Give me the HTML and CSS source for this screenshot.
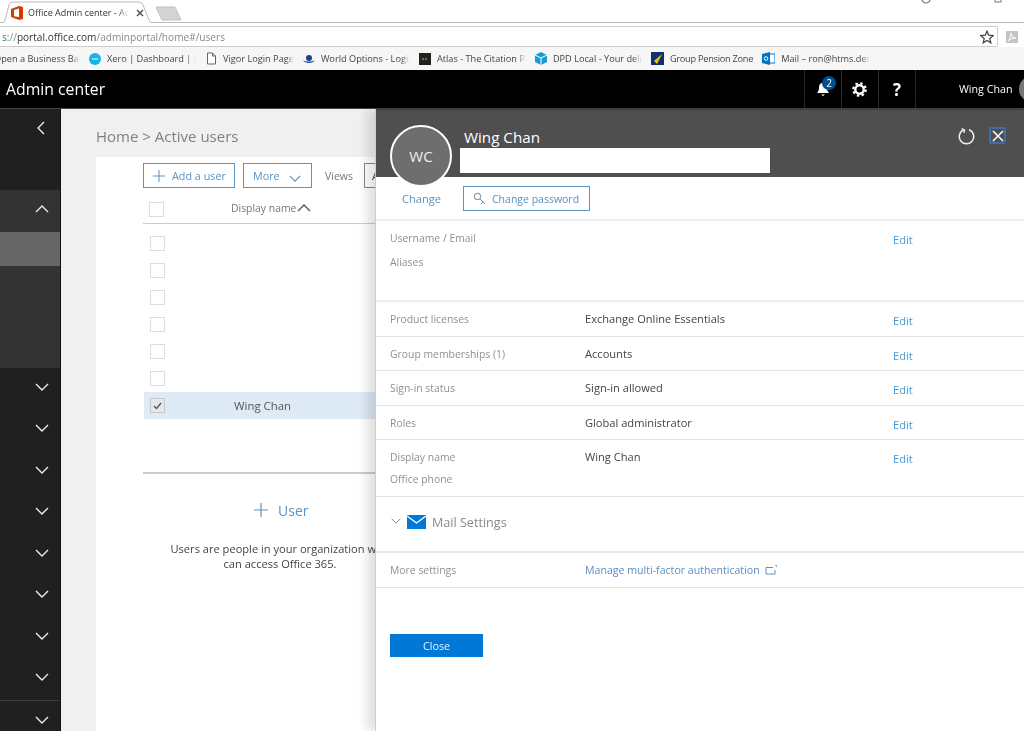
FILE: index.html
```html
<!doctype html>
<html>
<head>
	<meta charset="utf-8" />
	<title>Office Admin center - Active users</title>
	<link rel="stylesheet" href="styles.css">
</head>
<body>

<svg class="defs" width="0" height="0">
	<symbol id="down" viewBox="0 0 14 8"><path d="M1 1l6 6 6-6" fill="none" stroke="currentColor" stroke-width="1.4"/></symbol>
	<symbol id="plus" viewBox="0 0 14 14"><path d="M7 0v14M0 7h14" fill="none" stroke="currentColor" stroke-width="1.2"/></symbol>
</svg>

<div class="chrome">
	<div class="tabstrip">
		<div class="tab">
			<svg class="tabshape" width="158" height="23"><path d="M0 23h2q2 0 3-3L9 5q1-3 4-3h126q3 0 4 3l6 15q1 3 4 3h5" fill="#fff" stroke="#bbb"/></svg>
			<svg class="favicon" width="12" height="14" viewBox="0 0 12 14"><path d="M0 3L8 0l4 1v12l-4 1-8-3z" fill="#d83b01"/><path d="M3 4l5-1.500v8.500l-5-.8z" fill="#fff"/></svg>
			<span class="tabtitle">Office Admin center - Active users</span>
			<svg class="tabclose" width="8" height="8"><path d="M1 1l6 6M7 1L1 7" stroke="#555" stroke-width="1.5"/></svg>
		</div>
		<svg class="newtab" width="28" height="15"><path d="M1 1h19l6 13H7z" fill="#d4d4d4" stroke="#c0c0c0"/></svg>
		<div class="winbtns">
			<svg width="10" height="4"><circle cx="5" cy="-1" r="4" fill="none" stroke="#777" stroke-width="1.200"/></svg>
			<svg width="8" height="3"><rect x="1" y="-4" width="6" height="6" fill="none" stroke="#777"/></svg>
		</div>
	</div>
	<div class="toolbar">
		<div class="omnibox">
			<span class="url"><span class="scheme">s:</span><span class="soft">//</span><span class="host">portal.office.com</span><span class="soft">/adminportal/home#/users</span></span>
			<svg width="14" height="14" viewBox="0 0 24 24"><path d="M12 2l3 7 7.500.7-5.700 5 1.700 7.300L12 18l-6.500 4 1.700-7.300-5.700-5L9 9z" fill="none" stroke="#444" stroke-width="2.200"/></svg>
		</div>
		<div class="pdficon"><svg width="10" height="10" viewBox="0 0 10 10"><path d="M1 9c2-2 3-5 3-8 0 3 2 5 5 5-3 0-6 1-8 3z" fill="none" stroke="#fff"/></svg></div>
	</div>
	<div class="bookmarks">
		<div class="bm first"><span>Open a Business Bank Account</span></div>
		<div class="bm">
			<svg width="12" height="12"><circle cx="6" cy="6" r="6" fill="#13b5ea"/><path d="M3 6h6" stroke="#fff"/></svg>
			<span>Xero | Dashboard | Sparkle Ltd</span>
		</div>
		<div class="bm">
			<svg width="12" height="13"><path d="M2.500 1h5l3 3v8h-8z" fill="#fff" stroke="#666"/><path d="M7.500 1v3h3" fill="none" stroke="#666"/></svg>
			<span>Vigor Login Page</span>
		</div>
		<div class="bm">
			<svg width="12" height="12"><circle cx="6" cy="5" r="3" fill="#1d3f8f"/><path d="M0 7c2 4 10 4 12 0-3 2-9 2-12 0z" fill="#1d3f8f"/></svg>
			<span>World Options - Login Page</span>
		</div>
		<div class="bm">
			<svg width="12" height="12"><rect width="12" height="12" fill="#222"/><path d="M3 6h6" stroke="#e0b040" stroke-dasharray="2 1"/></svg>
			<span>Atlas - The Citation Portal</span>
		</div>
		<div class="bm">
			<svg width="12" height="13"><path d="M6 0l6 3v7l-6 3-6-3V3z" fill="#1a9ad6"/><path d="M0 3l6 3 6-3M6 6v7" fill="none" stroke="#fff"/></svg>
			<span>DPD Local - Your delivery</span>
		</div>
		<div class="bm short">
			<svg width="13" height="13"><rect width="13" height="13" fill="#12306e"/><path d="M11 2L3 9l3 3z" fill="#f4c20d"/></svg>
			<span>Group Pension Zone</span>
		</div>
		<div class="bm">
			<svg width="13" height="13"><rect x="5" y="2" width="8" height="9" fill="#fff" stroke="#0072c6"/><path d="M0 2l8-2v13l-8-2z" fill="#0072c6"/><circle cx="4" cy="6.500" r="1.800" fill="none" stroke="#fff"/></svg>
			<span>Mail – ron@htms.demon.co.uk</span>
		</div>
	</div>
</div>

<header class="topbar">
	<div class="brand">Admin center</div>
	<div class="topicon bell">
		<svg width="16" height="16" viewBox="0 0 16 16"><path d="M8 2c3 0 4 2 4 5 0 2 1 4 2 5H2c1-1 2-3 2-5 0-3 1-5 4-5z M6 13.500h4L8 15z" fill="#fff"/></svg>
		<span class="badge">2</span>
	</div>
	<div class="topicon gear">
		<svg width="15" height="15" viewBox="0 0 16 16"><circle cx="8" cy="8" r="4.500" fill="none" stroke="#fff" stroke-width="2.600"/><circle cx="8" cy="8" r="6.600" fill="none" stroke="#fff" stroke-width="2.400" stroke-dasharray="2.600 2.580"/></svg>
	</div>
	<div class="topicon help">?</div>
	<div class="me">Wing Chan<span class="meavatar"></span></div>
</header>

<div class="shell">
	<nav class="sidebar">
		<div class="navtop">
			<svg width="8" height="14" viewBox="0 0 8 14"><path d="M7 1L1 7l6 6" fill="none" stroke="#eee" stroke-width="1.400"/></svg>
		</div>
		<div class="navopen">
			<div class="navitem head"><svg class="up" width="14" height="8"><use href="#down"/></svg></div>
			<div class="navsel"></div>
		</div>
		<div class="navitem"><svg width="14" height="8"><use href="#down"/></svg></div>
		<div class="navitem"><svg width="14" height="8"><use href="#down"/></svg></div>
		<div class="navitem"><svg width="14" height="8"><use href="#down"/></svg></div>
		<div class="navitem"><svg width="14" height="8"><use href="#down"/></svg></div>
		<div class="navitem"><svg width="14" height="8"><use href="#down"/></svg></div>
		<div class="navitem"><svg width="14" height="8"><use href="#down"/></svg></div>
		<div class="navitem"><svg width="14" height="8"><use href="#down"/></svg></div>
		<div class="navitem"><svg width="14" height="8"><use href="#down"/></svg></div>
		<div class="navitem sep"><svg width="14" height="8"><use href="#down"/></svg></div>
	</nav>

	<main class="main">
		<div class="crumb">Home &gt; Active users</div>
		<div class="content">
			<div class="cmdbar">
				<button class="btn add"><svg width="12" height="12"><use href="#plus"/></svg>Add a user</button>
				<button class="btn more">More<svg width="12" height="7"><use href="#down"/></svg></button>
				<span class="views">Views</span>
				<span class="viewbox">All users</span>
			</div>
			<div class="thead">
				<span class="check big"></span>
				<span class="thname">Display name</span>
				<svg class="sortup" width="14" height="8"><use href="#down"/></svg>
			</div>
			<div class="list">
				<div class="urow"><span class="check"></span></div>
				<div class="urow"><span class="check"></span></div>
				<div class="urow"><span class="check"></span></div>
				<div class="urow"><span class="check"></span></div>
				<div class="urow"><span class="check"></span></div>
				<div class="urow"><span class="check"></span></div>
				<div class="urow selected">
					<span class="check on"><svg width="9" height="8"><path d="M1 4l2.500 2.500L8 1" fill="none" stroke="#555" stroke-width="1.300"/></svg></span>
					<span class="uname">Wing Chan</span>
				</div>
			</div>
			<div class="addblock">
				<div class="adduser"><svg width="14" height="14"><use href="#plus"/></svg>User</div>
				<p class="addtext">Users are people in your organization who can access Office 365.</p>
			</div>
		</div>
	</main>
</div>

<aside class="panel">
	<div class="phead">
		<div class="avatar">WC</div>
		<div class="ptitle">
			<div class="pname">Wing Chan</div>
			<div class="pmask"></div>
		</div>
		<svg class="refresh" width="18" height="18" viewBox="0 0 18 18"><path d="M6 2.800a7.200 7.200 0 1 0 5 0" fill="none" stroke="#eee" stroke-width="1.500"/><path d="M3.500 1.500L6.500 2.800 6 6" fill="none" stroke="#eee" stroke-width="1.300"/></svg>
		<div class="pclose"><svg width="12" height="12"><path d="M1 1l10 10M11 1L1 11" stroke="#fff" stroke-width="1.500"/></svg></div>
	</div>

	<div class="pactions">
		<a class="change">Change</a>
		<button class="btn pass">
			<svg width="13" height="13" viewBox="0 0 13 13"><circle cx="4.500" cy="4.500" r="3.200" fill="none" stroke="#5a86ad"/><path d="M7 7l5 5M10 10l-1.500 1.500" fill="none" stroke="#5a86ad"/></svg>
			Change password
		</button>
	</div>

	<div class="prow identity">
		<div class="plabel">
			<div>Username / Email</div>
			<div class="second">Aliases</div>
		</div>
		<div></div>
		<a class="edit">Edit</a>
	</div>
	<div class="prow"><div class="plabel">Product licenses</div><div class="pval">Exchange Online Essentials</div><a class="edit">Edit</a></div>
	<div class="prow"><div class="plabel">Group memberships (1)</div><div class="pval">Accounts</div><a class="edit">Edit</a></div>
	<div class="prow"><div class="plabel">Sign-in status</div><div class="pval">Sign-in allowed</div><a class="edit">Edit</a></div>
	<div class="prow"><div class="plabel">Roles</div><div class="pval">Global administrator</div><a class="edit">Edit</a></div>
	<div class="prow tall">
		<div class="plabel">
			<div>Display name</div>
			<div class="phone">Office phone</div>
		</div>
		<div class="pval">Wing Chan</div>
		<a class="edit">Edit</a>
	</div>

	<div class="pmail">
		<svg class="mailchev" width="10" height="6"><use href="#down"/></svg>
		<svg width="19" height="14" viewBox="0 0 19 14"><rect width="19" height="14" fill="#0078d7"/><path d="M0 1l9.500 7L19 1" fill="none" stroke="#fff" stroke-width="1.400"/></svg>
		<span>Mail Settings</span>
	</div>

	<div class="prow more">
		<div class="plabel">More settings</div>
		<div class="mfa">
			<a>Manage multi-factor authentication</a>
			<svg class="ext" width="12" height="10" viewBox="0 0 12 10"><path d="M8 2.500H1v6.500h9V5" fill="none" stroke="#5a8fc0"/><path d="M9.500 0h2.500v2.500" fill="none" stroke="#5a8fc0"/></svg>
		</div>
	</div>

	<button class="closebtn">Close</button>
</aside>

</body>
</html>
```

FILE: styles.css
```css
* {
	box-sizing: border-box;
}

html, body {
	margin: 0;
	height: 731px;
	overflow: hidden;
}

body {
	font-family: "Open Sans", "Liberation Sans", sans-serif;
	font-size: 11.1px;
	color: #444;
	background: #fff;
	filter: blur(.3px);
}

svg {
	display: block;
	flex: none;
}

.defs {
	position: absolute;
}

button {
	font-family: inherit;
	cursor: pointer;
}

/* browser chrome */

.tabstrip {
	height: 23px;
	display: flex;
	align-items: flex-start;
	border-bottom: 1px solid #bbb;
}

.tab {
	position: relative;
	width: 155px;
	height: 23px;
	display: flex;
	align-items: center;
	padding: 2px 0 0 11px;
}

.tabshape {
	position: absolute;
	left: 0;
	top: 0;
}

.favicon,
.tabtitle,
.tabclose {
	position: relative;
}

.tabtitle {
	width: 101px;
	margin-left: 5px;
	overflow: hidden;
	white-space: nowrap;
	font-size: 9px;
	color: #333;
	-webkit-mask-image: linear-gradient(to right, #000 88%, transparent);
}

.tabclose {
	margin-left: 7px;
}

.newtab {
	margin: 6px 0 0 0;
}

.winbtns {
	margin-left: auto;
	display: flex;
	align-items: flex-start;
	gap: 63px;
	padding-right: 22px;
}

.toolbar {
	height: 24px;
	display: flex;
	align-items: center;
	padding-top: 3px;
}

.omnibox {
	width: 998px;
	height: 21px;
	display: flex;
	align-items: center;
	justify-content: space-between;
	padding: 0 3px 0 2px;
	border: 1px solid #ccc;
	border-left: 0;
	border-radius: 0 2px 2px 0;
}

.url {
	font-size: 10.1px;
}

.scheme {
	color: #3d8a4e;
}

.host {
	color: #333;
}

.soft {
	color: #888;
}

.pdficon {
	width: 12px;
	height: 12px;
	margin-left: 8px;
	background: #c4c4c4;
	display: flex;
	align-items: center;
	justify-content: center;
}

.bookmarks {
	height: 23px;
	display: flex;
	align-items: center;
	gap: 9px;
	background: #f6f6f6;
	overflow: hidden;
}

.bm {
	display: flex;
	align-items: center;
	gap: 6px;
	font-size: 9.2px;
	color: #444;
}

.bm span {
	max-width: 89px;
	overflow: hidden;
	white-space: nowrap;
	-webkit-mask-image: linear-gradient(to right, #000 90%, transparent);
}

.bm.first {
	margin-left: -6px;
}

.bm.first span {
	max-width: 86px;
}

.bm.short span {
	letter-spacing: -.25px;
	-webkit-mask-image: none;
}

/* top bar */

.topbar {
	height: 39px;
	display: flex;
	align-items: center;
	background: #000;
	color: #fff;
	border-bottom: 1px solid #444;
}

.brand {
	width: 804px;
	flex: none;
	padding-left: 6px;
	font-size: 15.8px;
}

.topicon {
	position: relative;
	width: 37px;
	height: 38px;
	flex: none;
	display: flex;
	align-items: center;
	justify-content: center;
	border-left: 1px solid #2a2a2a;
}

.gear {
	padding-right: 2px;
}

.help {
	font-size: 17px;
	font-weight: 700;
	border-right: 1px solid #2a2a2a;
	width: 38px;
}

.badge {
	position: absolute;
	left: 17px;
	top: 6px;
	width: 14px;
	height: 14px;
	border-radius: 50%;
	background: #004f8f;
	font-size: 10px;
	line-height: 14px;
	text-align: center;
}

.me {
	display: flex;
	align-items: center;
	gap: 7px;
	margin-left: 43px;
	font-size: 10.7px;
	white-space: nowrap;
}

.meavatar {
	width: 26px;
	height: 26px;
	border-radius: 50%;
	background: #777;
	flex: none;
}

/* sidebar */

.shell {
	height: 622px;
	display: flex;
}

.sidebar {
	width: 61px;
	background: #202020;
	border-right: 1px solid #111;
	color: #eee;
}

.navtop {
	height: 81px;
	padding: 12px 0 0 37px;
}

.navopen {
	height: 178px;
	background: #333;
}

.navitem {
	height: 41.5px;
	display: flex;
	align-items: center;
	padding: 0 0 4px 35px;
}

.navitem.head {
	height: 42px;
	padding-bottom: 5px;
}

.up {
	transform: scaleY(-1);
}

.navsel {
	height: 34px;
	background: #666;
}

.navitem.sep {
	padding-bottom: 2px;
	border-top: 1px solid #3a3a3a;
}

/* users list */

.main {
	flex: 1;
	background: #f0f0f0;
}

.crumb {
	height: 48px;
	padding: 16px 0 0 35px;
	font-size: 15px;
	line-height: 22px;
	color: #808080;
}

.content {
	height: 574px;
	margin-left: 35px;
	padding-left: 47px;
	background: #fff;
	overflow: hidden;
}

.cmdbar {
	display: flex;
	align-items: center;
	gap: 8px;
	margin-top: 6px;
	height: 25px;
	white-space: nowrap;
}

.btn {
	height: 25px;
	display: flex;
	align-items: center;
	padding: 0;
	background: #fff;
	border: 1px solid #5a93c4;
	color: #5a93c4;
	font-size: 10.8px;
}

.btn.add {
	width: 92px;
	gap: 7px;
	padding-left: 9px;
}

.btn.more {
	width: 69px;
	gap: 9px;
	padding-left: 9px;
}

.btn.more svg {
	margin-top: 5px;
}

.views {
	margin-left: 5px;
	font-size: 10.5px;
	color: #777;
}

.viewbox {
	width: 60px;
	height: 25px;
	margin-left: 3px;
	padding: 4px 0 0 7px;
	border: 1px solid #888;
}

.thead {
	height: 36px;
	display: flex;
	align-items: center;
	padding: 7px 0 0 6px;
	border-bottom: 1px solid #ccc;
}

.check {
	width: 15px;
	height: 15px;
	border: 1px solid #ddd;
	background: #fff;
	display: flex;
	align-items: center;
	justify-content: center;
	flex: none;
}

.thname {
	margin: -3px 0 0 67px;
	font-size: 10.4px;
	color: #777;
}

.sortup {
	margin: -3px 0 0 1px;
	transform: scaleY(-1);
	color: #555;
}

.list {
	padding-top: 6px;
	height: 250px;
	border-bottom: 2px solid #ccc;
}

.urow {
	height: 27px;
	display: flex;
	align-items: center;
	padding-left: 7px;
}

.urow.selected {
	background: #deeaf6;
	margin-left: 1px;
	padding-left: 6px;
}

.check.on {
	background: #e4e8ec;
	border-color: #c8c8c8;
}

.uname {
	margin-left: 69px;
	font-size: 11.4px;
	color: #555;
}

.addblock {
	width: 230px;
	margin-left: 19px;
	text-align: center;
}

.adduser {
	display: flex;
	align-items: center;
	gap: 10px;
	margin: 26px 0 0 92px;
	height: 20px;
	font-size: 14px;
	color: #5a93c4;
}

.addtext {
	width: 236px;
	margin: 21px 0 0 0;
	line-height: 15px;
	color: #444;
}

/* user panel */

.panel {
	position: absolute;
	left: 375px;
	top: 109px;
	width: 649px;
	height: 622px;
	background: #fff;
	border-left: 1px solid #ccc;
	box-shadow: -8px 0 10px rgba(0, 0, 0, .12);
}

.phead {
	height: 68px;
	display: flex;
	align-items: flex-start;
	padding-left: 14px;
	background: #4f4f4f;
	border-top: 1px solid #3a3a3a;
}

.avatar {
	width: 62px;
	height: 62px;
	margin-top: 15px;
	border: 2px solid #fff;
	border-radius: 50%;
	background: #6e6e6e;
	color: #eee;
	font-size: 15px;
	line-height: 58px;
	text-align: center;
	flex: none;
	position: relative;
}

.ptitle {
	width: 310px;
	margin-left: 8px;
}

.pname {
	margin: 16px 0 0 4px;
	height: 22px;
	font-size: 15.2px;
	line-height: 22px;
	color: #fff;
}

.pmask {
	height: 25px;
	background: #fff;
}

.refresh {
	margin: 17px 0 0 188px;
}

.pclose {
	width: 17px;
	height: 17px;
	margin: 17px 0 0 13px;
	display: flex;
	align-items: center;
	justify-content: center;
	border: 2px solid #3e6da8;
	border-radius: 2px;
}

.pactions {
	height: 44px;
	display: flex;
	align-items: flex-start;
	padding-top: 9px;
	border-bottom: 2px solid #eee;
}

.change {
	width: 87px;
	padding: 5px 0 0 26px;
	color: #5a93c4;
	white-space: nowrap;
}

.btn.pass {
	width: 127px;
	gap: 6px;
	padding-left: 9px;
	font-size: 10.5px;
	white-space: nowrap;
	color: #5a8fc0;
}

.prow {
	height: 34.5px;
	display: grid;
	grid-template-columns: 209px 308px 1fr;
	padding: 9px 0 0 14px;
	border-bottom: 1px solid #e2e2e2;
	line-height: 16px;
	white-space: nowrap;
}

.identity {
	height: 81px;
	border-bottom-width: 2px;
	border-color: #eee;
}

.second {
	margin-top: 8px;
}

.tall {
	height: 57px;
}

.phone {
	margin-top: 6px;
}

.plabel {
	font-size: 10.4px;
	color: #909090;
}

.pval {
	color: #444;
	margin-left: -14px;
}

.edit {
	margin: 2px 0 0 -14px;
	color: #4a9ad4;
}

.pmail {
	height: 56px;
	display: flex;
	align-items: center;
	gap: 6px;
	padding: 0 0 4px 15px;
	border-bottom: 2px solid #e8e8e8;
	font-size: 12.6px;
	color: #8a8a8a;
}

.mailchev {
	margin-top: -3px;
	color: #888;
}

.prow.more {
	height: 35px;
}

.mfa {
	display: flex;
	align-items: flex-start;
	gap: 5px;
	grid-column: 2 / 4;
	margin-left: -14px;
	font-size: 10.6px;
	color: #5a8fc0;
}

.ext {
	margin-top: 3px;
}

.closebtn {
	display: block;
	width: 93px;
	height: 23px;
	margin: 46px 0 0 14px;
	padding: 0;
	border: 0;
	background: #0078d7;
	color: #e6f1fb;
	font-size: 10.8px;
}
```
